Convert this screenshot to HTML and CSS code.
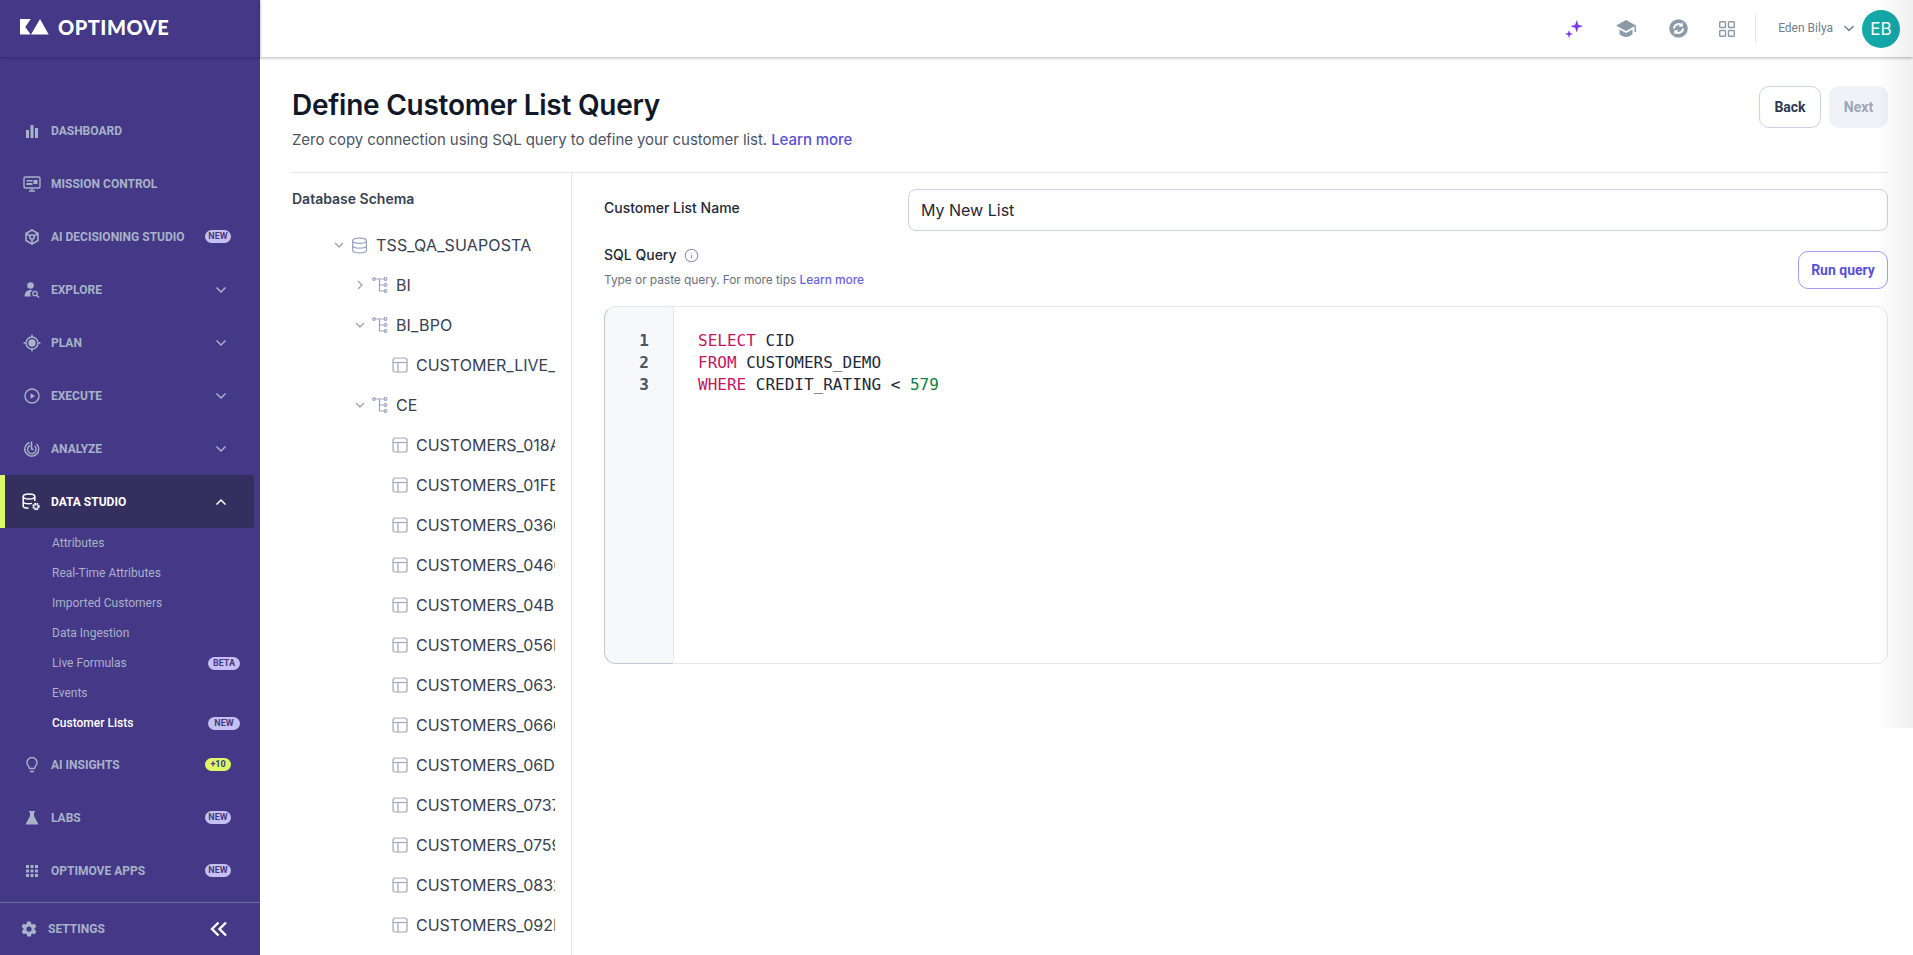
FILE: index.html
```html
<!DOCTYPE html>
<html lang="en">
<head>
    <meta charset="UTF-8">
    <title>Define Customer List Query</title>
    <link rel="stylesheet" href="styles.css">
</head>
<body>
    <aside class="sidebar">
        <div class="logo">
            <svg class="logo-mark" width="29" height="16" viewBox="0 0 29 16"><path d="M0 0h10.700L5.300 8l5.400 7.500H0z" fill="#fff"/><path d="M20 0l8.700 15.500H11z" fill="#fff"/></svg>
            <span>OPTIMOVE</span>
        </div>
        <nav class="nav">
            <div class="nav-item">
                <svg class="nav-icon" viewBox="0 0 18 18"><path d="M3 8h3v8H3zM7.500 3h3v13h-3zM12 6h3v10h-3z" fill="currentColor"/></svg>
                <span class="nav-label">DASHBOARD</span>
            </div>
            <div class="nav-item">
                <svg class="nav-icon" viewBox="0 0 18 18" fill="none" stroke="currentColor" stroke-width="1.400"><rect x="1" y="2" width="16" height="11" rx="1.500"/><path d="M6 16h6M9 13v3" /><path d="M3.500 5h6v1.500h-6zM10.500 5h4v4h-4zM3.500 8h6v2h-6z" fill="currentColor" stroke="none"/></svg>
                <span class="nav-label">MISSION CONTROL</span>
            </div>
            <div class="nav-item">
                <svg class="nav-icon" viewBox="0 0 18 18" fill="none" stroke="currentColor" stroke-width="1.600"><path d="M9 2l6 3.500v7L9 16l-6-3.500v-7z"/><circle cx="9" cy="9" r="2.200"/><path d="M9 11.200V16M7 8L3 5.500M11 8l4-2.500"/></svg>
                <span class="nav-label">AI DECISIONING STUDIO</span>
                <span class="badge">NEW</span>
            </div>
            <div class="nav-item">
                <svg class="nav-icon" viewBox="0 0 18 18"><circle cx="7.500" cy="4.500" r="3.300" fill="currentColor"/><path d="M1.500 15.500c0-3.800 2.500-6.500 6-6.500 1 0 1.500.2 2 .4a4 4 0 0 0-1.500 6.100z" fill="currentColor"/><circle cx="12" cy="12.500" r="2.200" fill="none" stroke="currentColor" stroke-width="1.300"/><path d="M13.500 14.200l2.500 2.300" stroke="currentColor" stroke-width="1.500"/></svg>
                <span class="nav-label">EXPLORE</span>
                <svg class="nav-chevron" viewBox="0 0 12 8"><path d="M1.500 1.500L6 6l4.500-4.500"/></svg>
            </div>
            <div class="nav-item">
                <svg class="nav-icon" viewBox="0 0 18 18" fill="none" stroke="currentColor" stroke-width="1.400"><circle cx="9" cy="9" r="6"/><circle cx="9" cy="9" r="3" fill="currentColor"/><path d="M9 .500v2.500M9 15v2.500M.500 9H3M15 9h2.500"/></svg>
                <span class="nav-label">PLAN</span>
                <svg class="nav-chevron" viewBox="0 0 12 8"><path d="M1.500 1.500L6 6l4.500-4.500"/></svg>
            </div>
            <div class="nav-item">
                <svg class="nav-icon" viewBox="0 0 18 18" fill="none" stroke="currentColor" stroke-width="1.400"><circle cx="9" cy="9" r="7"/><path d="M7.500 6.200L12 9l-4.500 2.800z" fill="currentColor" stroke="none"/></svg>
                <span class="nav-label">EXECUTE</span>
                <svg class="nav-chevron" viewBox="0 0 12 8"><path d="M1.500 1.500L6 6l4.500-4.500"/></svg>
            </div>
            <div class="nav-item">
                <svg class="nav-icon" viewBox="0 0 18 18" fill="none" stroke="currentColor" stroke-width="1.400"><path d="M6.500 2.500a7 7 0 1 0 7 1.500"/><path d="M7 5.500a4.300 4.300 0 1 0 4.500 .5"/><path d="M8.500 1.500v7.500a1.500 1.500 0 0 0 2 0" stroke-width="1.600"/></svg>
                <span class="nav-label">ANALYZE</span>
                <svg class="nav-chevron" viewBox="0 0 12 8"><path d="M1.500 1.500L6 6l4.500-4.500"/></svg>
            </div>
            <div class="nav-item nav-item-active">
                <svg class="nav-icon nav-icon-wide" viewBox="0 0 19 18" fill="none" stroke="currentColor" stroke-width="1.500"><ellipse cx="7" cy="3.500" rx="5.800" ry="2.500"/><path d="M1.200 3.500v9.500c0 1.300 2.500 2.200 5.300 2.200M1.200 8.500c0 1.300 2.500 2.300 5.800 2.300 1 0 2-.1 3-.4M12.800 3.500v4.500"/><circle cx="14" cy="13.500" r="2.500" stroke-width="2.400" stroke-dasharray="1.500 .5"/></svg>
                <span class="nav-label">DATA STUDIO</span>
                <svg class="nav-chevron" viewBox="0 0 12 8"><path d="M1.500 6.500L6 2l4.500 4.500"/></svg>
            </div>
            <div class="sub-nav">
                <div class="sub-item">Attributes</div>
                <div class="sub-item">Real-Time Attributes</div>
                <div class="sub-item">Imported Customers</div>
                <div class="sub-item">Data Ingestion</div>
                <div class="sub-item">Live Formulas<span class="badge">BETA</span></div>
                <div class="sub-item">Events</div>
                <div class="sub-item sub-item-active">Customer Lists<span class="badge">NEW</span></div>
            </div>
            <div class="nav-item">
                <svg class="nav-icon" viewBox="0 0 18 18" fill="none" stroke="currentColor" stroke-width="1.400"><path d="M6.500 12.500c0-2-2.500-3-2.500-6a5 5 0 0 1 10 0c0 3-2.500 4-2.500 6z"/><path d="M7 15.500h4" stroke-width="1.600"/></svg>
                <span class="nav-label">AI INSIGHTS</span>
                <span class="badge badge-lime">+10</span>
            </div>
            <div class="nav-item">
                <svg class="nav-icon" viewBox="0 0 18 18"><path d="M6 2h6v1.300h-1V7l4.500 8.500H2.500L7 7V3.300H6z" fill="currentColor"/></svg>
                <span class="nav-label">LABS</span>
                <span class="badge">NEW</span>
            </div>
            <div class="nav-item">
                <svg class="nav-icon" viewBox="0 0 18 18" fill="currentColor"><path d="M3 3h3v3H3zM7.500 3h3v3h-3zM12 3h3v3h-3zM3 7.500h3v3H3zM7.500 7.500h3v3h-3zM12 7.500h3v3h-3zM3 12h3v3H3zM7.500 12h3v3h-3zM12 12h3v3h-3z"/></svg>
                <span class="nav-label">OPTIMOVE APPS</span>
                <span class="badge">NEW</span>
            </div>
        </nav>
        <div class="settings">
            <svg class="settings-icon" viewBox="0 0 24 24"><path fill="currentColor" d="M19.400 13c.1-.3.100-.7.100-1s0-.7-.1-1l2.100-1.600c.2-.2.200-.4.100-.6l-2-3.500c-.1-.2-.4-.3-.6-.2l-2.500 1c-.5-.4-1.100-.7-1.700-1l-.4-2.600c0-.3-.2-.4-.5-.4h-4c-.3 0-.5.100-.5.400l-.4 2.600c-.6.300-1.200.6-1.700 1l-2.500-1c-.2-.1-.5 0-.6.200l-2 3.500c-.1.200-.1.400.1.600L4.600 11c-.1.300-.1.700-.1 1s0 .7.100 1l-2.100 1.600c-.2.200-.2.400-.1.600l2 3.500c.1.200.4.300.6.200l2.500-1c.5.400 1.100.7 1.700 1l.4 2.600c0 .3.200.4.500.4h4c.3 0 .5-.1.500-.4l.4-2.600c.6-.3 1.200-.6 1.700-1l2.500 1c.2.100.5 0 .6-.2l2-3.500c.1-.2.100-.4-.1-.6zM12 15.500a3.500 3.500 0 1 1 0-7 3.500 3.500 0 0 1 0 7z"/></svg>
            <span class="nav-label">SETTINGS</span>
            <svg class="collapse" viewBox="0 0 18 16"><path d="M8.500 1.500L2 8l6.500 6.500M16 1.500L9.500 8l6.500 6.500"/></svg>
        </div>
    </aside>

    <div class="main">
        <header class="topbar">
            <svg class="icon-spark" viewBox="0 0 18 18"><path fill="#7c3aed" d="M11.700 0l1.500 4.800 4.800 1.500-4.800 1.500-1.500 4.800-1.500-4.800-4.800-1.500 4.800-1.500zM4 10l1 3 3 1-3 1-1 3-1-3-3-1 3-1z"/></svg>
            <svg class="icon-cap" viewBox="0 0 21 17"><path fill="#8b9ca8" d="M10 0L0 5.500 10 11l8.500-4.700V12H20V5.500zM3.500 9.500V14c1.700 1.900 4.200 3 6.500 3s4.800-1.100 6.500-3V9.500L10 13z"/></svg>
            <svg class="icon-sync" viewBox="0 0 19 19"><circle cx="9.500" cy="9.500" r="9.300" fill="#8b9ca8"/><path d="M5 9.500A4.500 4.500 0 0 1 12.200 6M14 9.500A4.500 4.500 0 0 1 6.800 13" fill="none" stroke="#fff" stroke-width="2"/><path d="M13.800 3.300v4.400H9.400zM5.200 15.700v-4.400h4.400z" fill="#fff"/></svg>
            <svg class="icon-grid" viewBox="0 0 16 16" fill="none" stroke="#8b9ca8" stroke-width="1.400"><rect x=".7" y=".7" width="5.800" height="5.800" rx=".8"/><rect x="9.500" y=".7" width="5.800" height="5.800" rx=".8"/><rect x=".7" y="9.500" width="5.800" height="5.800" rx=".8"/><rect x="9.500" y="9.500" width="5.800" height="5.800" rx=".8"/></svg>
            <div class="top-divider"></div>
            <span class="user-name">Eden Bilya</span>
            <svg class="user-chevron" viewBox="0 0 10 7"><path d="M.5 1L5 5.500 9.500 1"/></svg>
            <div class="avatar">EB</div>
        </header>

        <div class="content">
            <div class="page-head">
                <div>
                    <h1>Define Customer List Query</h1>
                    <p class="subtitle">Zero copy connection using SQL query to define your customer list. <a class="link">Learn more</a></p>
                </div>
                <div class="page-actions">
                    <button class="button button-back">Back</button>
                    <button class="button button-next">Next</button>
                </div>
            </div>

            <div class="split">
                <section class="schema">
                    <h3>Database Schema</h3>
                    <div class="tree">
                        <div class="tree-row level-0">
                            <svg class="tree-chevron" viewBox="0 0 12 12"><path d="M2 4l4 4 4-4"/></svg>
                            <svg class="tree-icon" viewBox="0 0 16 16"><ellipse cx="8" cy="3.500" rx="6.500" ry="2.500"/><path d="M1.500 3.500v9c0 1.400 2.900 2.500 6.500 2.500s6.500-1.100 6.500-2.500v-9M1.500 8c0 1.400 2.900 2.500 6.500 2.500s6.500-1.100 6.500-2.500"/></svg>
                            <span>TSS_QA_SUAPOSTA</span>
                        </div>
                        <div class="tree-row level-1">
                            <svg class="tree-chevron" viewBox="0 0 12 12"><path d="M4 2l4 4-4 4"/></svg>
                            <svg class="tree-icon" viewBox="0 0 16 16"><circle cx="2" cy="2" r="1.300"/><circle cx="13.500" cy="2" r="1.300"/><circle cx="13.500" cy="8" r="1.300"/><circle cx="13.500" cy="14" r="1.300"/><path d="M3.300 2h8.900M7.500 2v12h4.700M7.500 8h4.700"/></svg>
                            <span>BI</span>
                        </div>
                        <div class="tree-row level-1">
                            <svg class="tree-chevron" viewBox="0 0 12 12"><path d="M2 4l4 4 4-4"/></svg>
                            <svg class="tree-icon" viewBox="0 0 16 16"><circle cx="2" cy="2" r="1.300"/><circle cx="13.500" cy="2" r="1.300"/><circle cx="13.500" cy="8" r="1.300"/><circle cx="13.500" cy="14" r="1.300"/><path d="M3.300 2h8.900M7.500 2v12h4.700M7.500 8h4.700"/></svg>
                            <span>BI_BPO</span>
                        </div>
                        <div class="tree-row level-2">
                            <svg class="tree-icon" viewBox="0 0 16 16"><rect x="1" y="1" width="14" height="14" rx="2"/><path d="M1 5.500h14M6 5.500V15"/></svg>
                            <span>CUSTOMER_LIVE_SNAPSHOT</span>
                        </div>
                        <div class="tree-row level-1">
                            <svg class="tree-chevron" viewBox="0 0 12 12"><path d="M2 4l4 4 4-4"/></svg>
                            <svg class="tree-icon" viewBox="0 0 16 16"><circle cx="2" cy="2" r="1.300"/><circle cx="13.500" cy="2" r="1.300"/><circle cx="13.500" cy="8" r="1.300"/><circle cx="13.500" cy="14" r="1.300"/><path d="M3.300 2h8.900M7.500 2v12h4.700M7.500 8h4.700"/></svg>
                            <span>CE</span>
                        </div>
                        <div class="tree-row level-2"><svg class="tree-icon" viewBox="0 0 16 16"><rect x="1" y="1" width="14" height="14" rx="2"/><path d="M1 5.500h14M6 5.500V15"/></svg><span>CUSTOMERS_018A2B</span></div>
                        <div class="tree-row level-2"><svg class="tree-icon" viewBox="0 0 16 16"><rect x="1" y="1" width="14" height="14" rx="2"/><path d="M1 5.500h14M6 5.500V15"/></svg><span>CUSTOMERS_01FB7C</span></div>
                        <div class="tree-row level-2"><svg class="tree-icon" viewBox="0 0 16 16"><rect x="1" y="1" width="14" height="14" rx="2"/><path d="M1 5.500h14M6 5.500V15"/></svg><span>CUSTOMERS_0360D1</span></div>
                        <div class="tree-row level-2"><svg class="tree-icon" viewBox="0 0 16 16"><rect x="1" y="1" width="14" height="14" rx="2"/><path d="M1 5.500h14M6 5.500V15"/></svg><span>CUSTOMERS_0460E4</span></div>
                        <div class="tree-row level-2"><svg class="tree-icon" viewBox="0 0 16 16"><rect x="1" y="1" width="14" height="14" rx="2"/><path d="M1 5.500h14M6 5.500V15"/></svg><span>CUSTOMERS_04B0F2</span></div>
                        <div class="tree-row level-2"><svg class="tree-icon" viewBox="0 0 16 16"><rect x="1" y="1" width="14" height="14" rx="2"/><path d="M1 5.500h14M6 5.500V15"/></svg><span>CUSTOMERS_056E19</span></div>
                        <div class="tree-row level-2"><svg class="tree-icon" viewBox="0 0 16 16"><rect x="1" y="1" width="14" height="14" rx="2"/><path d="M1 5.500h14M6 5.500V15"/></svg><span>CUSTOMERS_0634A7</span></div>
                        <div class="tree-row level-2"><svg class="tree-icon" viewBox="0 0 16 16"><rect x="1" y="1" width="14" height="14" rx="2"/><path d="M1 5.500h14M6 5.500V15"/></svg><span>CUSTOMERS_0666C3</span></div>
                        <div class="tree-row level-2"><svg class="tree-icon" viewBox="0 0 16 16"><rect x="1" y="1" width="14" height="14" rx="2"/><path d="M1 5.500h14M6 5.500V15"/></svg><span>CUSTOMERS_06D2B8</span></div>
                        <div class="tree-row level-2"><svg class="tree-icon" viewBox="0 0 16 16"><rect x="1" y="1" width="14" height="14" rx="2"/><path d="M1 5.500h14M6 5.500V15"/></svg><span>CUSTOMERS_0737D5</span></div>
                        <div class="tree-row level-2"><svg class="tree-icon" viewBox="0 0 16 16"><rect x="1" y="1" width="14" height="14" rx="2"/><path d="M1 5.500h14M6 5.500V15"/></svg><span>CUSTOMERS_0759E0</span></div>
                        <div class="tree-row level-2"><svg class="tree-icon" viewBox="0 0 16 16"><rect x="1" y="1" width="14" height="14" rx="2"/><path d="M1 5.500h14M6 5.500V15"/></svg><span>CUSTOMERS_0832F6</span></div>
                        <div class="tree-row level-2"><svg class="tree-icon" viewBox="0 0 16 16"><rect x="1" y="1" width="14" height="14" rx="2"/><path d="M1 5.500h14M6 5.500V15"/></svg><span>CUSTOMERS_092E4A</span></div>
                    </div>
                </section>

                <section class="query">
                    <div class="name-row">
                        <label class="field-label">Customer List Name</label>
                        <div class="name-input">My New List</div>
                    </div>
                    <div class="sql-head">
                        <div>
                            <div class="sql-title">
                                <span class="field-label">SQL Query</span>
                                <svg class="info-icon" viewBox="0 0 16 16"><circle cx="8" cy="8" r="6.700"/><path d="M8 7.500v3.500M8 5v.8"/></svg>
                            </div>
                            <p class="hint">Type or paste query. For more tips <a class="link">Learn more</a></p>
                        </div>
                        <button class="button button-run">Run query</button>
                    </div>
                    <div class="editor">
                        <div class="gutter">
                            <div>1</div>
                            <div>2</div>
                            <div>3</div>
                        </div>
                        <div class="code">
                            <div><span class="kw">SELECT</span> CID</div>
                            <div><span class="kw">FROM</span> CUSTOMERS_DEMO</div>
                            <div><span class="kw">WHERE</span> CREDIT_RATING &lt; <span class="num">579</span></div>
                        </div>
                    </div>
                </section>
            </div>
        </div>
    </div>
    <div class="edge-shade"></div>
</body>
</html>
```

FILE: styles.css
```css
* {
    box-sizing: border-box;
}
html, body {
    height: 100%;
    margin: 0;
    overflow: hidden;
}
body {
    display: flex;
    font-family: Inter, sans-serif;
    background-color: #fff;
    color: #111827;
}
p, h1, h3 {
    margin: 0;
}

/* sidebar */
.sidebar {
    width: 260px;
    flex: none;
    height: 955px;
    background-color: #453887;
    display: flex;
    flex-direction: column;
    font-family: Roboto, sans-serif;
    color: #a6b3c9;
}
.logo {
    height: 57px;
    flex: none;
    display: flex;
    align-items: center;
    gap: 9px;
    padding-left: 20px;
    padding-bottom: 3px;
    color: #fff;
    font-family: Lato, sans-serif;
    font-size: 20px;
    font-weight: 900;
    letter-spacing: 0.500px;
    box-shadow: 0 1px 3px rgba(30, 20, 70, 0.4);
}
.logo-mark {
    flex: none;
}
.nav {
    padding-top: 47px;
    flex: 1;
}
.nav-item {
    height: 53px;
    display: flex;
    align-items: center;
    padding-left: 23px;
    padding-right: 23px;
    width: 254px;
}
.nav-icon {
    width: 18px;
    height: 18px;
    flex: none;
    margin-right: 10px;
}
.nav-icon-wide {
    width: 19px;
    margin-left: -1px;
}
.nav-label {
    font-size: 12px;
    font-weight: 700;
    flex: 1;
    white-space: nowrap;
}
.nav-chevron {
    width: 12px;
    height: 8px;
    fill: none;
    stroke: currentColor;
    stroke-width: 1.500;
    margin-right: 4px;
}
.nav-item-active {
    background-color: #352f60;
    color: #fff;
    border-left: 5px solid #dcf767;
    border-radius: 0 3px 3px 0;
    padding-left: 18px;
}
.badge {
    height: 13px;
    line-height: 13px;
    width: 26px;
    flex: none;
    text-align: center;
    background-color: #c5c0f2;
    color: #453887;
    border-radius: 7px;
    font-size: 9px;
    font-weight: 700;
}
.badge-lime {
    background-color: #dcf767;
}
.sub-nav {
    padding-left: 52px;
}
.sub-item {
    height: 30px;
    display: flex;
    align-items: center;
    justify-content: space-between;
    padding-right: 20px;
    font-size: 12px;
}
.sub-item .badge {
    width: 32px;
}
.sub-item-active {
    color: #fff;
    font-weight: 500;
}
.settings {
    height: 53px;
    flex: none;
    display: flex;
    align-items: center;
    border-top: 1px solid #6a6f9e;
    padding-left: 20px;
    padding-right: 32px;
}
.settings-icon {
    width: 18px;
    height: 18px;
    margin-right: 10px;
}
.collapse {
    width: 18px;
    height: 16px;
    fill: none;
    stroke: #fff;
    stroke-width: 2.400;
}

/* main */
.main {
    flex: 1;
    min-width: 0;
    display: flex;
    flex-direction: column;
}
.topbar {
    height: 57px;
    flex: none;
    display: flex;
    align-items: center;
    justify-content: flex-end;
    padding-right: 13px;
    box-shadow: 0 1px 3px rgba(0, 0, 0, 0.3);
    position: relative;
}
.icon-spark {
    width: 18px;
    height: 18px;
    margin-right: 33px;
    flex: none;
}
.icon-cap {
    width: 21px;
    height: 17px;
    margin-right: 32px;
    flex: none;
}
.icon-sync {
    width: 19px;
    height: 19px;
    margin-right: 31px;
    flex: none;
}
.icon-grid {
    width: 16px;
    height: 16px;
    margin-right: 20px;
    flex: none;
}
.top-divider {
    width: 1px;
    height: 28px;
    background-color: #e5e7eb;
    margin-right: 22px;
}
.user-name {
    font-family: Roboto, sans-serif;
    font-size: 12px;
    color: #6b7f8e;
    margin-right: 11px;
    margin-bottom: 2px;
}
.user-chevron {
    width: 10px;
    height: 7px;
    fill: none;
    stroke: #6b7f8e;
    stroke-width: 1.400;
    margin-right: 8px;
}
.avatar {
    width: 38px;
    height: 38px;
    border-radius: 50%;
    background-color: #14a8a8;
    color: #fff;
    font-size: 17px;
    display: flex;
    align-items: center;
    justify-content: center;
}
.content {
    flex: 1;
    padding: 29px 25px 0 32px;
    min-height: 0;
}
.page-head {
    display: flex;
    justify-content: space-between;
    height: 86px;
}
h1 {
    margin-top: 1px;
    font-size: 28px;
    line-height: 36px;
    font-weight: 600;
    letter-spacing: -0.250px;
}
.subtitle {
    margin-top: 7px;
    font-size: 15px;
    line-height: 20px;
    letter-spacing: -0.060px;
    color: #4b5563;
}
.link {
    color: #5b4fd6;
    font-weight: 500;
}
.page-actions {
    display: flex;
    gap: 8px;
    align-items: flex-start;
}
.button {
    font-family: Roboto, sans-serif;
    font-size: 14px;
    font-weight: 700;
    border-radius: 10px;
    background-color: #fff;
    padding: 0;
}
.button-back {
    width: 62px;
    height: 42px;
    border: 1px solid #cbd2e0;
    color: #2d3a55;
}
.button-next {
    width: 59px;
    height: 42px;
    border: none;
    background-color: #f0f2f7;
    color: #9ca6b8;
}
.split {
    display: flex;
    border-top: 1px solid #e5e7eb;
    height: 783px;
}
.schema {
    width: 280px;
    flex: none;
    border-right: 1px solid #e5e7eb;
    padding-top: 17px;
}
.schema h3 {
    font-size: 14px;
    line-height: 18px;
    font-weight: 600;
    color: #374151;
}
.tree {
    margin-top: 17px;
    width: 263px;
    overflow: hidden;
}
.tree-row {
    height: 40px;
    display: flex;
    align-items: center;
    font-size: 16px;
    letter-spacing: 0.150px;
    color: #374151;
    white-space: nowrap;
}
.tree-row span {
    overflow: hidden;
    min-width: 0;
}
.level-0 {
    padding-left: 41px;
}
.level-1 {
    padding-left: 62px;
}
.level-2 {
    padding-left: 100px;
    letter-spacing: 0;
}
.tree-chevron {
    width: 12px;
    height: 12px;
    flex: none;
    fill: none;
    stroke: #9ca3af;
    stroke-width: 1.300;
    margin-right: 6px;
}
.tree-icon {
    width: 16px;
    height: 16px;
    flex: none;
    fill: none;
    stroke: #9aa5bd;
    stroke-width: 1.200;
    margin-right: 8px;
}
.level-0 .tree-icon {
    width: 17px;
    height: 17px;
}
.query {
    flex: 1;
    min-width: 0;
    padding: 16px 0 0 32px;
}
.name-row {
    display: flex;
}
.field-label {
    font-size: 14px;
    font-weight: 500;
    color: #1f2937;
}
.name-row .field-label {
    width: 304px;
    flex: none;
    padding-top: 10px;
}
.name-input {
    flex: 1;
    height: 42px;
    border: 1px solid #cbd2e0;
    border-radius: 8px;
    padding: 0 12px;
    font-size: 16px;
    line-height: 40px;
    color: #1f2937;
}
.sql-head {
    display: flex;
    justify-content: space-between;
    margin-top: 12px;
    height: 46px;
    align-items: flex-end;
}
.sql-title {
    display: flex;
    align-items: center;
    gap: 7px;
    height: 20px;
}
.info-icon {
    width: 15px;
    height: 15px;
    margin-top: 3px;
    fill: none;
    stroke: #8e9ab5;
    stroke-width: 1.200;
}
.hint {
    margin-top: 8px;
    margin-bottom: 1px;
    font-size: 12px;
    line-height: 16px;
    letter-spacing: -0.085px;
    color: #6b7280;
}
.hint .link {
    color: #6c63e0;
}
.button-run {
    width: 90px;
    height: 38px;
    border: 1px solid #a49df5;
    color: #5b4fd6;
}
.editor {
    display: flex;
    margin-top: 17px;
    height: 358px;
    border: 1px solid #e5e7eb;
    border-radius: 12px;
    font-family: "DejaVu Sans Mono", monospace;
    font-size: 16px;
    line-height: 22px;
}
.gutter {
    width: 70px;
    flex: none;
    margin: -1px 0 -1px -1px;
    background-color: #f7f8fa;
    border: 1px solid #e5e7eb;
    border-left-color: #c4c9d1;
    border-bottom-color: #c4c9d1;
    border-radius: 12px 4px 4px 12px;
    padding-top: 23px;
    padding-right: 24px;
    text-align: right;
    color: #4b5563;
    font-weight: 700;
}
.code {
    padding: 23px 0 0 24px;
    color: #1f2937;
}
.kw {
    color: #c2185b;
}
.num {
    color: #0f8048;
}
.edge-shade {
    position: fixed;
    top: 0;
    right: 0;
    width: 38px;
    height: 728px;
    background: linear-gradient(to right, rgba(0, 0, 0, 0), rgba(0, 0, 0, 0.06));
    pointer-events: none;
}
```
